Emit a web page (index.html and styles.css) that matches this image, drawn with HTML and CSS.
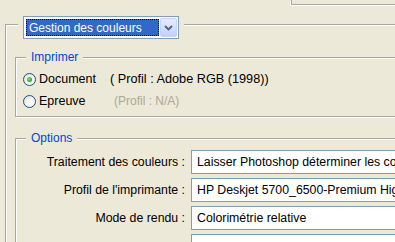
FILE: index.html
```html
<!DOCTYPE html>
<html lang="fr">
<head>
<meta charset="utf-8">
<title>Gestion des couleurs</title>
<link rel="stylesheet" href="styles.css">
</head>
<body>
<div class="frag"></div>
<div class="outer">
  <div class="outer-head">
    <div class="select">
      <div class="select-val"><span>Gestion des couleurs</span></div>
      <div class="select-btn">
        <svg width="9" height="6" viewBox="0 0 9 6"><path d="M1 1 L4.5 4.5 L8 1" fill="none" stroke="#4d6185" stroke-width="1.8"/></svg>
      </div>
    </div>
  </div>
  <div class="group print">
    <div class="cap">Imprimer</div>
    <div class="radios">
      <div class="radio-row">
        <span class="radio checked"></span><span class="rlabel">Document</span>
        <span class="profile">( Profil : Adobe RGB (1998))</span>
      </div>
      <div class="radio-row">
        <span class="radio"></span><span class="rlabel">Epreuve</span>
        <span class="profile dim">(Profil : N/A)</span>
      </div>
    </div>
  </div>
  <div class="group options">
    <div class="cap">Options</div>
    <div class="form">
      <div class="flabel">Traitement des couleurs :</div>
      <div class="field">Laisser Photoshop déterminer les couleurs</div>
      <div class="flabel">Profil de l'imprimante :</div>
      <div class="field">HP Deskjet 5700_6500-Premium High Gloss</div>
      <div class="flabel">Mode de rendu :</div>
      <div class="field">Colorimétrie relative</div>
      <div class="flabel"></div>
      <div class="field"></div>
    </div>
  </div>
</div>
</body>
</html>
```

FILE: styles.css
```css
html, body {
  margin: 0;
  padding: 0;
}
body {
  width: 395px;
  height: 242px;
  overflow: hidden;
  background: #ece9d8;
  font-family: "Liberation Sans", Arial, sans-serif;
  font-size: 12px;
  color: #000;
}
.frag {
  margin-left: 291px;
  width: 200px;
  height: 4px;
  border-left: 1px solid #aca899;
  border-bottom: 1px solid #aca899;
  box-shadow: -1px 1px 0 #fff;
}
.outer {
  margin-top: 19px;
  margin-left: 5px;
  width: 700px;
  height: 400px;
  border: 1px solid #aca899;
  box-shadow: inset 1px 1px 0 #fff;
}
.outer-head {
  margin-top: -9px;
  margin-left: 12px;
  padding: 0 5px;
  width: fit-content;
  background: #ece9d8;
}
.select {
  width: 154px;
  height: 21px;
  border: 1px solid #7f9db9;
  background: #fff;
  display: flex;
  align-items: stretch;
}
.select-val {
  margin: 2px 1px 2px 2px;
  width: 133px;
  background: #316ac5;
  outline: 1px dotted #000;
  outline-offset: -1px;
  color: #fff;
  display: flex;
  align-items: center;
  padding-left: 3px;
  box-sizing: border-box;
  font-size: 12px;
}
.select-btn {
  margin: 1px 1px 1px 0;
  width: 17px;
  box-sizing: border-box;
  border: 1px solid #c3d3fd;
  border-radius: 2px;
  background: linear-gradient(#e6edfd, #c1d1f7);
  display: flex;
  align-items: center;
  justify-content: center;
}
.group {
  margin-left: 9px;
  border: 1px solid #aca899;
  box-shadow: inset 1px 1px 0 #fff, 1px 1px 0 #fff;
}
.print {
  margin-top: 18px;
  padding-bottom: 5px;
}
.options {
  margin-top: 21px;
  height: 200px;
}
.cap {
  margin-top: -8px;
  margin-left: 10px;
  padding: 0 5px;
  width: fit-content;
  height: 14px;
  line-height: 14px;
  background: #ece9d8;
  color: #0046d5;
  font-size: 12px;
}
.radios {
  margin-top: 5px;
  padding-left: 7px;
  display: flex;
  flex-direction: column;
  gap: 2px;
}
.radio-row {
  height: 20px;
  display: grid;
  grid-template-columns: 13px 68px auto;
  column-gap: 3px;
  align-items: center;
}
.radio {
  width: 13px;
  height: 13px;
  box-sizing: border-box;
  border: 1px solid #1c5180;
  border-radius: 50%;
  background: radial-gradient(circle at 65% 65%, #fff 0, #f3f3ef 45%, #d9d8d2 100%);
  display: flex;
  align-items: center;
  justify-content: center;
}
.radio.checked::after {
  content: "";
  width: 5px;
  height: 5px;
  border-radius: 50%;
  background: radial-gradient(circle at 40% 40%, #8fe08f, #21a121 70%);
}
.rlabel {
  font-size: 12.5px;
}
.profile {
  font-size: 12.7px;
  white-space: nowrap;
}
.profile.dim {
  padding-left: 4px;
  font-size: 12px;
  color: #aca899;
}
.form {
  margin-top: 5px;
  display: grid;
  grid-template-columns: 169px 1fr;
  column-gap: 6px;
  row-gap: 4px;
}
.flabel {
  height: 24px;
  display: flex;
  align-items: center;
  justify-content: flex-end;
  white-space: nowrap;
  font-size: 12.3px;
}
.field {
  height: 24px;
  box-sizing: border-box;
  border: 1px solid #7f9db9;
  background: #fff;
  padding-left: 5px;
  display: flex;
  align-items: center;
  white-space: nowrap;
  font-size: 12.3px;
}
```
